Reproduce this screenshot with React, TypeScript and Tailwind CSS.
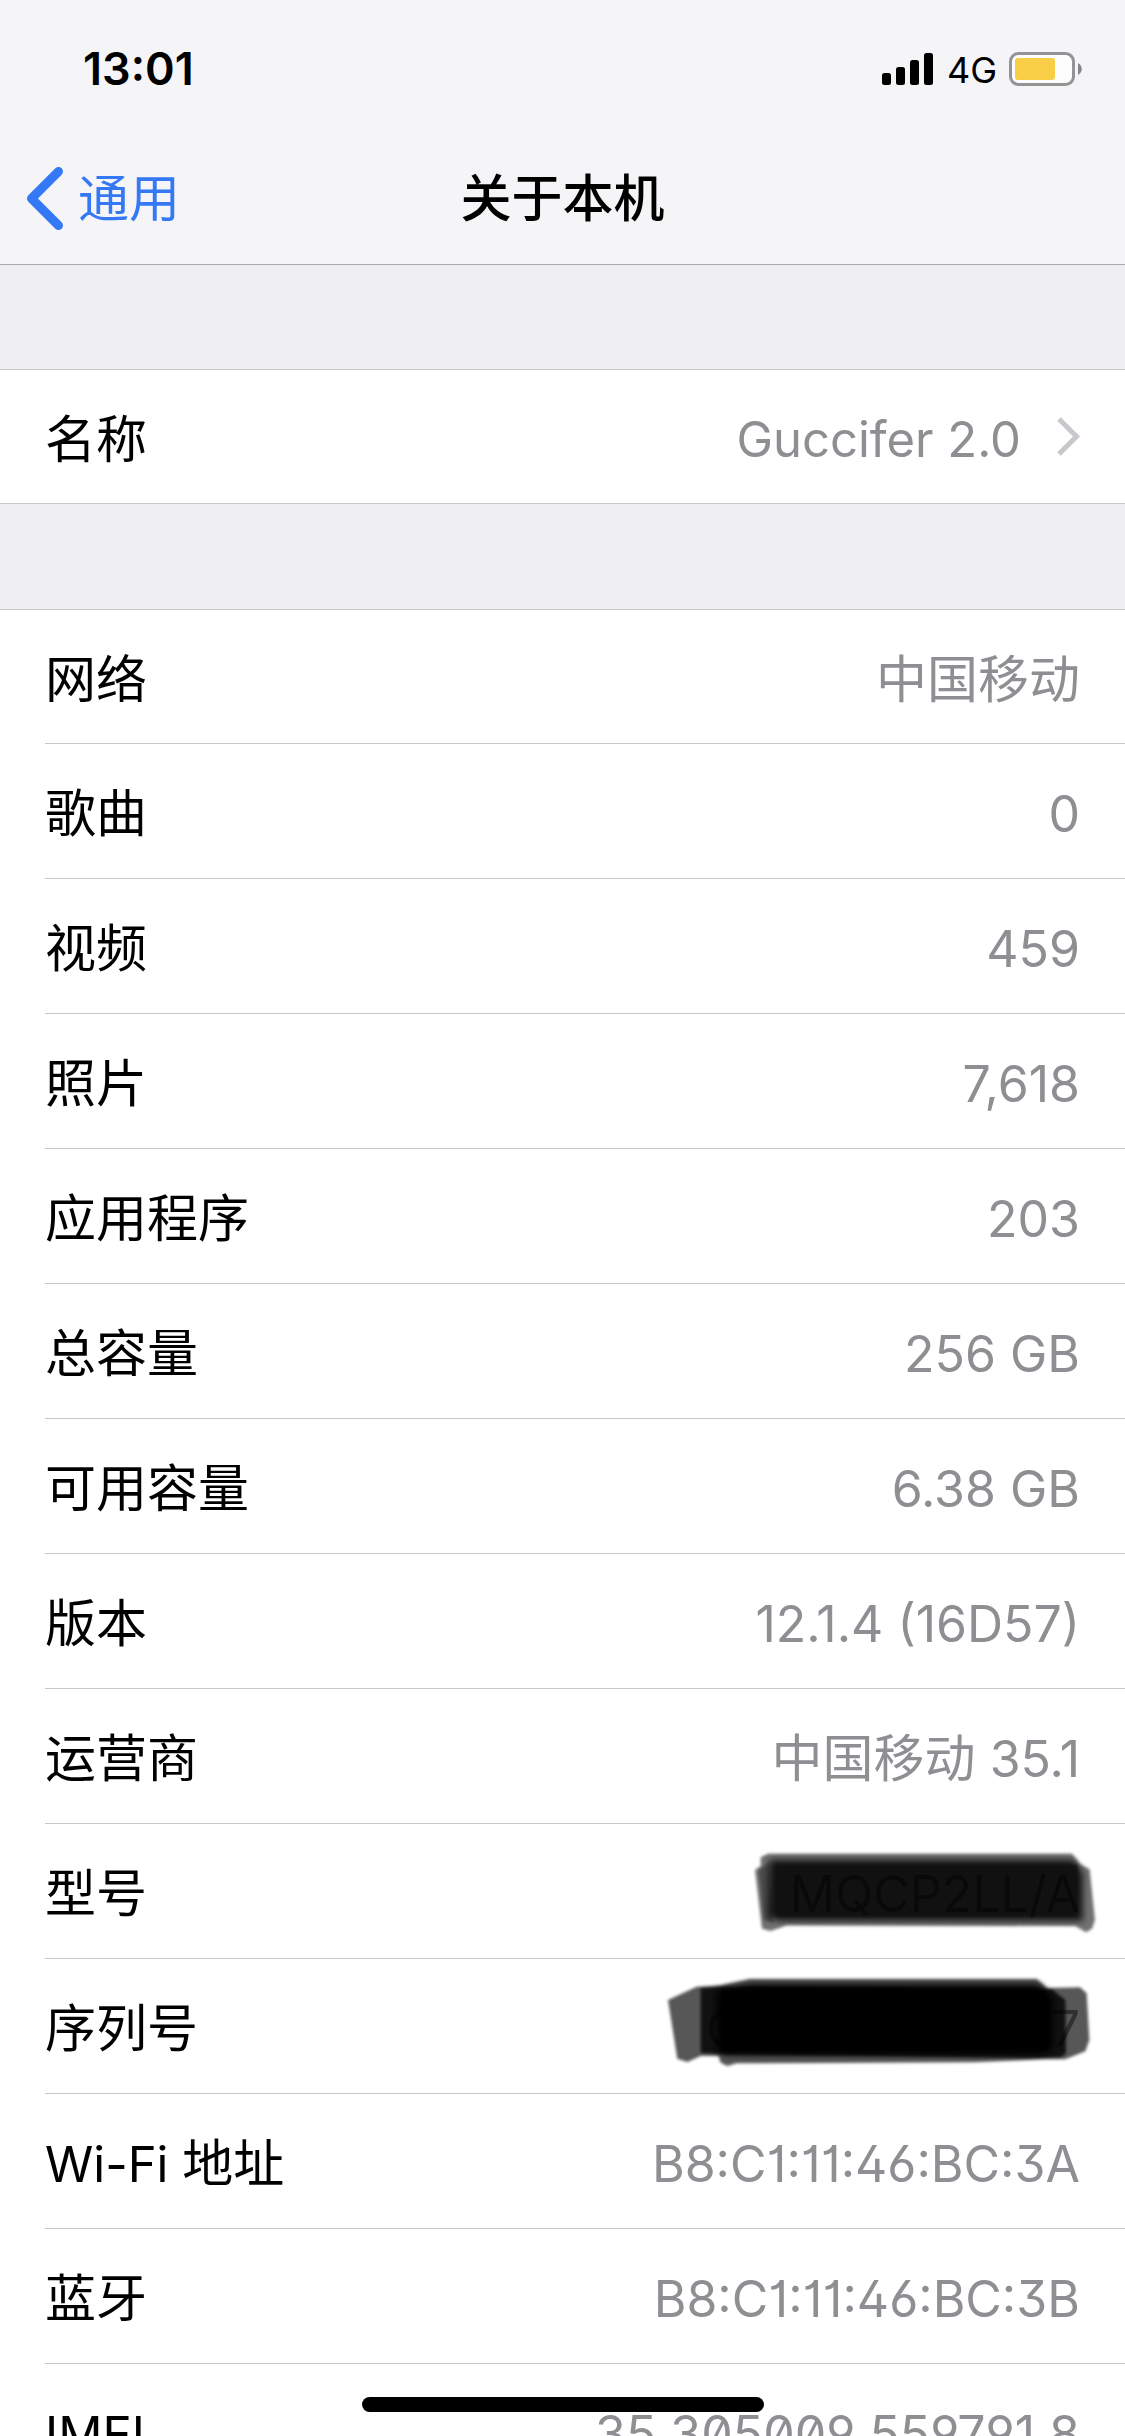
import type { ReactNode } from "react";

type Item = { label: ReactNode; value: ReactNode; ink?: ReactNode };

function ModelInk() {
  return (
    <svg className="absolute top-0 right-0 h-[134px] w-[485px]" viewBox="0 12 1455 402" aria-hidden="true">
      <defs>
        <filter id="soft-a" x="-10%" y="-20%" width="120%" height="140%">
          <feGaussianBlur stdDeviation="5" />
        </filter>
        <filter id="soft-b" x="-10%" y="-20%" width="120%" height="140%">
          <feGaussianBlur stdDeviation="11" />
        </filter>
      </defs>
      <g opacity="0.93">
        <g filter="url(#soft-a)">
          <path d="M362 112 L384 101 L1296 101 L1320 132 L1349 148 L1365 300 L1356 326 L1338 337 L1306 318 L440 316 L392 333 L366 326 L345 150 L362 138 Z" fill="#000" opacity="0.6" />
          <path d="M356 150 L390 125 L400 310 L372 300 Z" fill="#000" opacity="0.4" />
        </g>
        <path d="M388 120 L1300 120 L1328 160 L1328 302 L1290 302 L420 302 L384 292 Z" fill="#000" filter="url(#soft-b)" />
        <path d="M410 136 H1312 V288 H410 Z" fill="#000" filter="url(#soft-a)" />
      </g>
    </svg>
  );
}

function SerialInk() {
  return (
    <svg className="absolute top-0 right-0 h-[134px] w-[485px]" viewBox="0 417 1455 402" aria-hidden="true">
      <g filter="url(#soft-a)">
        <path d="M84 540 L170 500 L240 496 L330 477 L1190 477 L1222 504 L1320 502 L1340 520 L1348 660 L1336 694 L1300 708 L1275 718 L1210 718 L1000 727 L290 730 L262 738 L242 728 L236 708 L182 708 L142 726 L112 716 Z" fill="#000" opacity="0.66" />
        <path d="M182 504 L250 500 L1236 508 L1276 540 L1278 700 L1262 712 L1200 714 L240 702 L182 698 Z" fill="#000" opacity="0.8" />
      </g>
      <path d="M230 512 L330 492 L1196 492 L1240 535 L1240 690 L1195 702 L250 706 L232 690 Z" fill="#000" filter="url(#soft-b)" />
      <path d="M245 512 H1220 V690 H245 Z" fill="#000" filter="url(#soft-a)" />
    </svg>
  );
}

const technical = "[font-feature-settings:'ss01','cv01','cv02','cv03','cv04','case','zero']";

const items: Item[] = [
  { label: "网络", value: <span className="text-[51px]">中国移动</span> },
  { label: "歌曲", value: "0" },
  { label: "视频", value: "459" },
  { label: "照片", value: "7,618" },
  { label: "应用程序", value: "203" },
  { label: "总容量", value: "256 GB" },
  { label: "可用容量", value: "6.38 GB" },
  { label: "版本", value: "12.1.4 (16D57)" },
  {
    label: "运营商",
    value: (
      <>
        <span className="text-[51px]">中国移动</span> 35.1
      </>
    ),
  },
  { label: "型号", value: "MQCP2LL/A", ink: <ModelInk /> },
  {
    label: "序列号",
    value: (
      <span className="flex w-[374px] justify-between">
        <span>C</span>
        <span>7</span>
      </span>
    ),
    ink: <SerialInk />,
  },
  {
    label: (
      <>
        <span className="text-[49px]">Wi-Fi </span>地址
      </>
    ),
    value: <span className={technical}>B8:C1:11:46:BC:3A</span>,
  },
  { label: "蓝牙", value: <span className={technical}>B8:C1:11:46:BC:3B</span> },
  {
    label: <span className="text-[49px]">IMEI</span>,
    value: <span className="[font-feature-settings:'cv02','cv03','cv04','zero']">35 305009 559791 8</span>,
  },
];

function StatusBar() {
  return (
    <div className="flex h-[132px] items-center justify-between pt-1.5 pr-[43px] pl-[83px]">
      <time className="text-[45px] font-semibold">13:01</time>
      <div className="flex items-center">
        <svg className="h-8 w-[51px]" viewBox="0 0 51 32" aria-label="信号">
          <rect x="0" y="20" width="9" height="12" rx="2.5" />
          <rect x="14" y="14" width="9" height="18" rx="2.5" />
          <rect x="28" y="7" width="9" height="25" rx="2.5" />
          <rect x="42" y="0" width="9" height="32" rx="2.5" />
        </svg>
        <span className="mr-3 ml-3.5 pt-0.5 text-[36px]">4G</span>
        <svg className="h-[34px] w-[73px]" viewBox="0 0 73 34" aria-label="电池">
          <rect x="1.5" y="1.5" width="63" height="31" rx="8" fill="#fdfdfd" stroke="#949496" strokeWidth="3" />
          <rect x="6" y="6" width="40" height="22" rx="3" fill="#f8ce46" />
          <path d="M69 11 C74 14 74 20 69 23 Z" fill="#86868a" />
        </svg>
      </div>
    </div>
  );
}

export default function App() {
  return (
    <div className="relative flex h-screen flex-col overflow-hidden bg-[#efeef3] font-['Inter','Noto_Sans_CJK_SC',sans-serif] text-[51px] leading-[76px] text-black">
      <header className="shrink-0 border-b border-[#a9a9ac] bg-[#f5f5f7]">
        <StatusBar />
        <nav className="grid h-[132px] grid-cols-[1fr_auto_1fr] items-center">
          <a href="#general" className="flex items-center gap-[15px] justify-self-start pl-[26px] text-[#3478f6]">
            <svg className="h-[63px] w-[37px]" viewBox="0 0 37 63" fill="none" aria-hidden="true">
              <path d="M32.5 4.5 L5.5 31.5 L32.5 58.5" stroke="currentColor" strokeWidth="9" strokeLinecap="round" strokeLinejoin="round" />
            </svg>
            <span className="pt-0.5">通用</span>
          </a>
          <h1 className="pt-0.5 font-medium">关于本机</h1>
        </nav>
      </header>

      <main className="flex flex-col gap-[105px] pt-[104px]">
        <a href="#name" className="flex h-[135px] items-center justify-between border-y border-[#c8c7cc] bg-white px-[45px]">
          <span className="pt-1.5">名称</span>
          <span className="flex items-center gap-9 text-[49px] text-[#8e8e93]">
            <span className="pt-1.5">Guccifer 2.0</span>
            <svg className="h-[39px] w-[23px]" viewBox="0 0 23 39" fill="none" aria-hidden="true">
              <path d="M2 2 L19.5 19.5 L2 37" stroke="#c7c7cc" strokeWidth="5" />
            </svg>
          </span>
        </a>

        <dl className="border-t border-[#c8c7cc] bg-white pl-[45px]">
          {items.map((item, index) => (
            <div
              key={index}
              className="relative flex h-[135px] items-center justify-between border-b border-[#c8c7cc] pt-1.5 pr-[45px] first:h-[134px]"
            >
              <dt>{item.label}</dt>
              <dd className="text-[50px] text-[#8e8e93]">{item.value}</dd>
              {item.ink}
            </div>
          ))}
        </dl>
      </main>

      <div className="absolute bottom-6 left-1/2 h-[15px] w-[402px] -translate-x-1/2 rounded-full bg-black" />
    </div>
  );
}
